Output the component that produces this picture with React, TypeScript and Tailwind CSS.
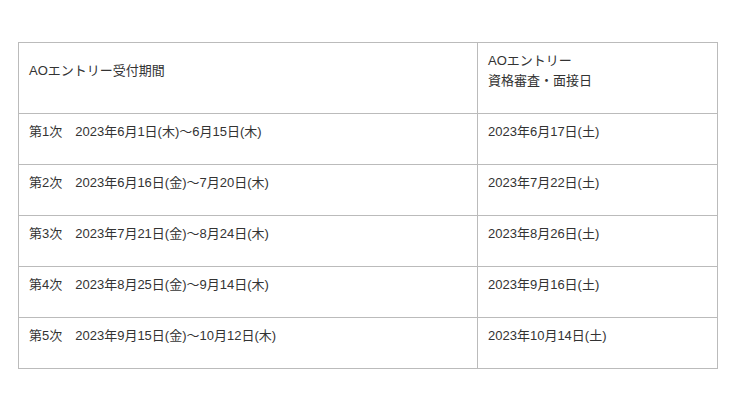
const rows = [
  ['第1次　2023年6月1日(木)〜6月15日(木)', '2023年6月17日(土)'],
  ['第2次　2023年6月16日(金)〜7月20日(木)', '2023年7月22日(土)'],
  ['第3次　2023年7月21日(金)〜8月24日(木)', '2023年8月26日(土)'],
  ['第4次　2023年8月25日(金)〜9月14日(木)', '2023年9月16日(土)'],
  ['第5次　2023年9月15日(金)〜10月12日(木)', '2023年10月14日(土)'],
]

const cell = 'border border-[#bbbbbb] pl-[10px] pr-[10px] pt-[8px] pb-[22px] align-middle text-left font-normal'

export default function App() {
  return (
    <div className="min-h-[409px] bg-white pt-[42px] pl-[18px] font-['Liberation_Sans','Noto_Sans_CJK_JP',sans-serif] text-[13px] leading-[20px] text-[#333333]">
      <table className="w-[700px] border-collapse">
        <thead>
          <tr>
            <th className={`${cell} w-[459px]`}>AOエントリー受付期間</th>
            <th className={cell}>
              AOエントリー
              <br />
              資格審査・面接日
            </th>
          </tr>
        </thead>
        <tbody>
          {rows.map(([period, date]) => (
            <tr key={date}>
              <td className={cell}>{period}</td>
              <td className={cell}>{date}</td>
            </tr>
          ))}
        </tbody>
      </table>
    </div>
  )
}
